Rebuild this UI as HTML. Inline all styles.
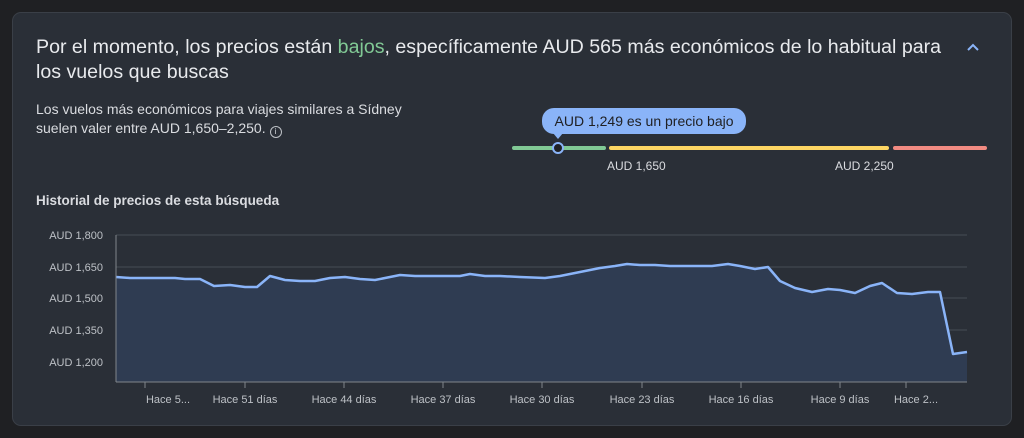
<!DOCTYPE html>
<html><head><meta charset="utf-8"><style>
body{margin:0;width:1024px;height:438px;background:#1f2023;font-family:"Liberation Sans",sans-serif;overflow:hidden;position:relative}
.card{position:absolute;left:12px;top:12px;width:998px;height:412px;background:#2a2f37;border:1px solid #3a3f47;border-radius:9px}
.t{position:absolute;color:#e8eaed}
</style></head><body>
<div class="card"></div>
<div class="t" style="left:36px;top:35px;font-size:19.6px;line-height:25px;width:925px">Por el momento, los precios están <span style="color:#81c995">bajos</span>, específicamente AUD 565 más económicos de lo habitual para los vuelos que buscas</div>
<svg style="position:absolute;left:964px;top:40px" width="18" height="14"><path d="M4 10 L9 5 L14 10" stroke="#8ab4f8" stroke-width="2" fill="none"/></svg>
<div class="t" style="left:36px;top:100px;font-size:14px;line-height:19px;color:#dadce0">Los vuelos más económicos para viajes similares a Sídney<br>suelen valer entre AUD 1,650–2,250. <span style="display:inline-block;width:10px;height:10px;border:1px solid #bdc1c6;border-radius:50%;font-size:8px;line-height:10px;text-align:center;vertical-align:-1px">i</span></div>
<div class="t" style="left:36px;top:193px;font-size:13.5px;font-weight:bold;color:#dadce0">Historial de precios de esta búsqueda</div>
<div style="position:absolute;left:542px;top:108px;width:204px;height:26px;background:#8ab4f8;border-radius:12px;color:#202124;font-size:14px;line-height:26px;text-align:center">AUD 1,249 es un precio bajo</div>
<div style="position:absolute;left:553px;top:133px;width:0;height:0;border-left:5px solid transparent;border-right:5px solid transparent;border-top:6px solid #8ab4f8"></div>
<div style="position:absolute;left:512px;top:146px;width:94px;height:4px;background:#81c995;border-radius:2px"></div>
<div style="position:absolute;left:609px;top:146px;width:280px;height:4px;background:#fdd663;border-radius:2px"></div>
<div style="position:absolute;left:893px;top:146px;width:94px;height:4px;background:#f28b82;border-radius:2px"></div>
<div style="position:absolute;left:552px;top:142px;width:8px;height:8px;border:2.5px solid #8ab4f8;background:#202124;border-radius:50%"></div>
<div class="t" style="left:607px;top:159px;font-size:12px;color:#dadce0">AUD 1,650</div>
<div class="t" style="left:835px;top:159px;font-size:12px;color:#dadce0">AUD 2,250</div>
<svg style="position:absolute;left:0;top:0" width="1024" height="438" font-family="Liberation Sans" font-size="11" fill="#bdc1c6">
<g stroke="#474c55" stroke-width="1">
<line x1="116" y1="235" x2="967" y2="235"/><line x1="116" y1="267" x2="967" y2="267"/><line x1="116" y1="298" x2="967" y2="298"/><line x1="116" y1="330" x2="967" y2="330"/><line x1="116" y1="362" x2="967" y2="362"/>
</g>
<polygon fill="#2f3c52" points="116,277 130,278 175,278 185,279 200,279 214,286 230,285 245,287 257,287 270,276 285,280 300,281 315,281 330,278 345,277 360,279 375,280 390,277 400,275 415,276 460,276 470,274 485,276 500,276 520,277 545,278 560,276 580,272 600,268 615,266 627,264 640,265 655,265 670,266 700,266 712,266 728,264 740,266 755,269 768,267 780,281 795,288 812,292 828,289 840,290 855,293 870,286 882,283 897,293 912,294 928,292 940,292 953,354 967,352 967,382 116,382"/>
<polyline fill="none" stroke="#8ab4f8" stroke-width="2.5" stroke-linejoin="round" points="116,277 130,278 175,278 185,279 200,279 214,286 230,285 245,287 257,287 270,276 285,280 300,281 315,281 330,278 345,277 360,279 375,280 390,277 400,275 415,276 460,276 470,274 485,276 500,276 520,277 545,278 560,276 580,272 600,268 615,266 627,264 640,265 655,265 670,266 700,266 712,266 728,264 740,266 755,269 768,267 780,281 795,288 812,292 828,289 840,290 855,293 870,286 882,283 897,293 912,294 928,292 940,292 953,354 967,352"/>
<g stroke="#80868b" stroke-width="1">
<line x1="116" y1="235" x2="116" y2="382"/><line x1="116" y1="382" x2="967" y2="382"/>
<line x1="145" y1="382" x2="145" y2="388"/><line x1="245" y1="382" x2="245" y2="388"/><line x1="344" y1="382" x2="344" y2="388"/><line x1="443" y1="382" x2="443" y2="388"/><line x1="542" y1="382" x2="542" y2="388"/><line x1="642" y1="382" x2="642" y2="388"/><line x1="741" y1="382" x2="741" y2="388"/><line x1="840" y1="382" x2="840" y2="388"/><line x1="906" y1="382" x2="906" y2="388"/>
</g>
<g text-anchor="end"><text x="103" y="239">AUD 1,800</text><text x="103" y="271">AUD 1,650</text><text x="103" y="302">AUD 1,500</text><text x="103" y="334">AUD 1,350</text><text x="103" y="366">AUD 1,200</text></g>
<g text-anchor="middle"><text x="168" y="403">Hace 5...</text><text x="245" y="403">Hace 51 días</text><text x="344" y="403">Hace 44 días</text><text x="443" y="403">Hace 37 días</text><text x="542" y="403">Hace 30 días</text><text x="642" y="403">Hace 23 días</text><text x="741" y="403">Hace 16 días</text><text x="840" y="403">Hace 9 días</text><text x="916" y="403">Hace 2...</text></g>
</svg>
</body></html>
